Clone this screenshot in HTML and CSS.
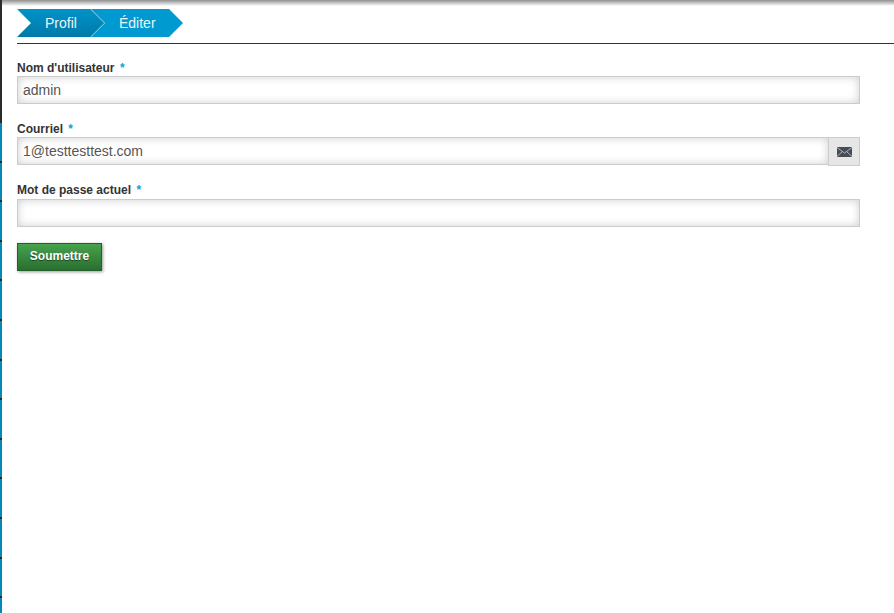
FILE: index.html
```html
<!doctype html>
<html lang="fr">
  <head>
    <meta charset="UTF-8" />
    <title>Éditer le profil</title>
    <link rel="stylesheet" href="styles.css">
  </head>
  <body>
    <aside class="edge">
      <div class="edge-top"></div>
      <div class="edge-item"></div>
      <div class="edge-item"></div>
      <div class="edge-item"></div>
      <div class="edge-item"></div>
      <div class="edge-item"></div>
      <div class="edge-item"></div>
      <div class="edge-item"></div>
      <div class="edge-item"></div>
      <div class="edge-item"></div>
      <div class="edge-item"></div>
      <div class="edge-item"></div>
      <div class="edge-item"></div>
    </aside>
    <main class="content">
      <nav class="breadcrumb">
        <a class="crumb crumb-first">Profil</a>
        <a class="crumb crumb-last">Éditer</a>
        <span class="crumb-sep"></span>
      </nav>
      <form class="form">
        <div class="form-group">
          <label for="name">Nom d'utilisateur <span class="req">*</span></label>
          <input type="text" id="name" value="admin">
        </div>
        <div class="form-group">
          <label for="mail">Courriel <span class="req">*</span></label>
          <div class="input-append">
            <input type="text" id="mail" value="1@testtesttest.com">
            <span class="addon">
              <svg width="15" height="10" viewBox="0 0 15 10">
                <rect width="15" height="10" fill="#464b54"/>
                <path d="M0 .5 7.500 6 15 .5M0 9.500 5.500 4.500M15 9.500 9.500 4.500" fill="none" stroke="#a9b6c4" stroke-width="1"/>
              </svg>
            </span>
          </div>
        </div>
        <div class="form-group">
          <label for="pass">Mot de passe actuel <span class="req">*</span></label>
          <input type="password" id="pass">
        </div>
        <button type="button" class="submit">Soumettre</button>
      </form>
    </main>
  </body>
</html>
```

FILE: styles.css
```css
* {
    box-sizing: border-box;
}

html,
body {
    height: 100%;
}

body {
    display: flex;
    margin: 0;
    overflow: hidden;
    background-color: #fff;
    color: #333;
    font-family: "Liberation Sans", Arial, sans-serif;
}

.edge {
    flex: none;
    width: 2px;
    height: 613px;
    background-color: #0587b9;
}

.edge-top {
    height: 123px;
    background-color: #2b2b2b;
}

.edge-item {
    height: 39.600px;
    border-bottom: 2px solid #222;
}

.content {
    flex: 1;
    min-width: 0;
    padding: 9px 0 0 15px;
    background: linear-gradient(#8f8f8f, #fff 6px) no-repeat;
}

.breadcrumb {
    position: relative;
    display: flex;
    height: 35px;
    border-bottom: 1px solid #333;
}

.crumb {
    display: flex;
    align-items: center;
    height: 28px;
    color: #e9f5fa;
    font-size: 14px;
}

.crumb-first {
    width: 88px;
    padding-left: 28px;
    background: linear-gradient(#0093c9, #007aa8);
    clip-path: polygon(0 0, 74px 0, 88px 14px, 74px 28px, 0 28px, 14px 14px);
}

.crumb-last {
    width: 92px;
    margin-left: -14px;
    padding-left: 28px;
    background-color: #0099d0;
    clip-path: polygon(0 0, 78px 0, 92px 14px, 78px 28px, 0 28px, 14px 14px);
}

/* thin light line along the arrow tip between the two crumbs */
.crumb-sep {
    position: absolute;
    top: 4px;
    left: 64px;
    width: 20px;
    height: 20px;
    border-top: 1px solid rgba(255, 255, 255, 0.3);
    border-right: 1px solid rgba(255, 255, 255, 0.3);
    transform: rotate(45deg);
}

.form {
    padding-top: 17px;
}

.form-group {
    width: 843px;
    margin-bottom: 18px;
}

.form-group:last-of-type {
    margin-bottom: 16px;
}

.form-group:last-of-type label {
    margin-bottom: 1px;
}

label {
    display: block;
    color: #333;
    font-size: 12px;
    font-weight: bold;
    line-height: 15px;
}

.req {
    margin-left: 2px;
    color: #1b9ecb;
}

input {
    display: block;
    width: 100%;
    height: 28px;
    padding: 0 5px;
    border: 1px solid #ccc;
    border-radius: 0;
    outline: none;
    box-shadow: inset 0 0 8px rgba(0, 0, 0, 0.2);
    background-color: #fff;
    color: #555;
    font-family: inherit;
    font-size: 14px;
}

.input-append {
    display: flex;
    align-items: flex-start;
    height: 28px;
}

.input-append input {
    flex: 1;
    min-width: 0;
    border-right: 0;
}

.addon {
    display: flex;
    flex: none;
    align-items: center;
    justify-content: center;
    width: 32px;
    height: 29px;
    border: 1px solid #ccc;
    background-color: #e6e6e6;
}

.submit {
    display: block;
    width: 85px;
    height: 28px;
    padding: 0 0 2px;
    border: 1px solid #24602a;
    border-radius: 0;
    box-shadow: 1px 1px 3px rgba(0, 0, 0, 0.4);
    background: linear-gradient(#46a34c, #2a6e31);
    color: #fff;
    font-family: inherit;
    font-size: 12px;
    font-weight: bold;
    text-shadow: 0 1px 1px rgba(0, 0, 0, 0.5);
}
```
